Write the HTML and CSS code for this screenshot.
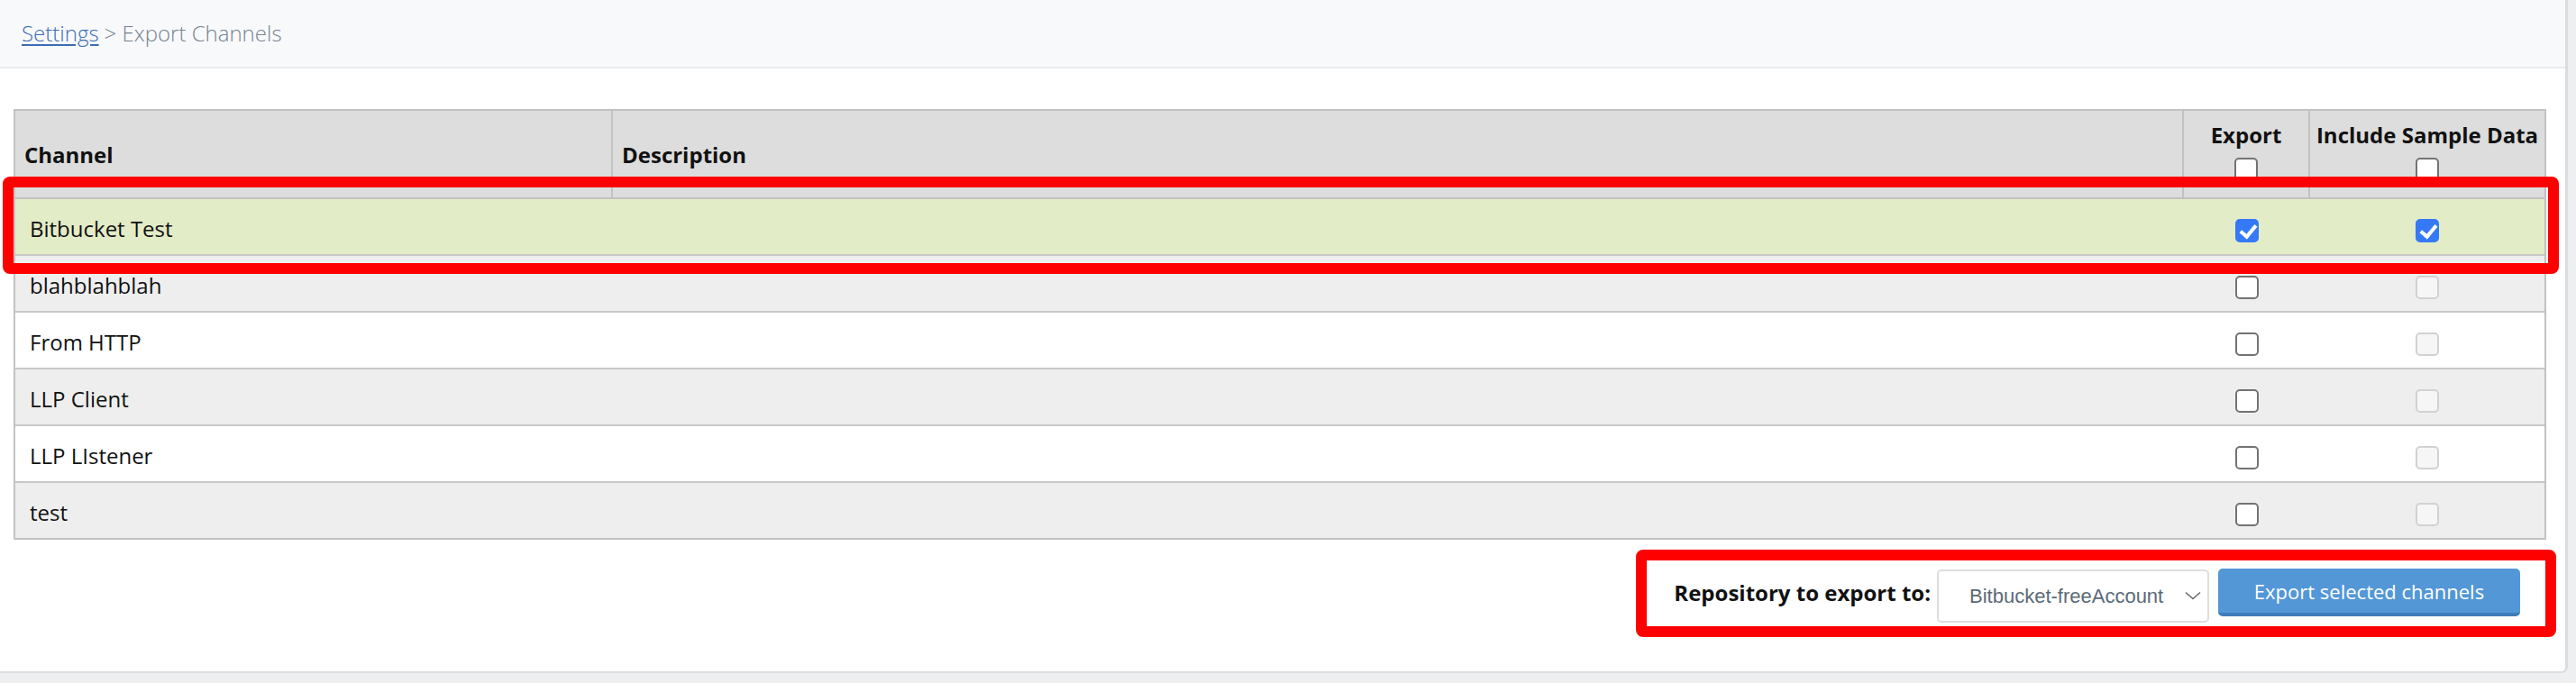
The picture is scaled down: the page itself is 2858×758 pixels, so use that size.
FILE: index.html
```html
<!DOCTYPE html>
<html lang="en">
<head>
<meta charset="utf-8">
<title>Export Channels</title>
<link rel="stylesheet" href="styles.css">
</head>
<body>
<div class="card">
  <div class="crumbs">
    <a class="crumb-link" href="#">Settings</a><span class="crumb-sep">&gt; Export Channels</span>
  </div>
  <div class="content">
    <div class="table-wrap">
      <table class="channels">
        <thead>
          <tr>
            <th class="col-channel">Channel</th>
            <th class="col-desc">Description</th>
            <th class="col-export">Export<input type="checkbox" class="cb head-cb"></th>
            <th class="col-sample">Include Sample Data<input type="checkbox" class="cb head-cb"></th>
          </tr>
        </thead>
        <tbody>
          <tr class="selected">
            <td>Bitbucket Test</td><td></td>
            <td class="c"><input type="checkbox" class="cb" checked></td>
            <td class="c"><input type="checkbox" class="cb" checked></td>
          </tr>
          <tr class="alt">
            <td>blahblahblah</td><td></td>
            <td class="c"><input type="checkbox" class="cb"></td>
            <td class="c"><input type="checkbox" class="cb" disabled></td>
          </tr>
          <tr>
            <td>From HTTP</td><td></td>
            <td class="c"><input type="checkbox" class="cb"></td>
            <td class="c"><input type="checkbox" class="cb" disabled></td>
          </tr>
          <tr class="alt">
            <td>LLP Client</td><td></td>
            <td class="c"><input type="checkbox" class="cb"></td>
            <td class="c"><input type="checkbox" class="cb" disabled></td>
          </tr>
          <tr>
            <td>LLP LIstener</td><td></td>
            <td class="c"><input type="checkbox" class="cb"></td>
            <td class="c"><input type="checkbox" class="cb" disabled></td>
          </tr>
          <tr class="alt last">
            <td>test</td><td></td>
            <td class="c"><input type="checkbox" class="cb"></td>
            <td class="c"><input type="checkbox" class="cb" disabled></td>
          </tr>
        </tbody>
      </table>
      <div class="mark mark-row"></div>
    </div>
    <div class="export-bar">
      <div class="export-group">
        <label class="repo-label" for="repo">Repository to export to:</label>
        <div class="select-wrap">
          <select id="repo" class="repo-select"><option>Bitbucket-freeAccount</option></select>
          <svg class="chev" width="18" height="10" viewBox="0 0 18 10"><path d="M1 1.5 L9 8.5 L17 1.5" fill="none" stroke="#6a6a6a" stroke-width="1.6"/></svg>
        </div>
        <button class="export-btn" type="button">Export selected channels</button>
        <div class="mark mark-bar"></div>
      </div>
    </div>
  </div>
</div>
</body>
</html>
```

FILE: styles.css
```css
* { box-sizing: border-box; }
html, body { margin: 0; padding: 0; }
body {
  background: #eeeff1;
  font-family: "Open Sans", "Liberation Sans", sans-serif;
  color: #111;
  width: 2858px;
  height: 758px;
  overflow: hidden;
}
.card {
  width: 2849px;
  background: #fff;
  border-right: 3px solid #dcdde0;
  border-bottom: 2px solid #dcdde0;
  border-bottom-right-radius: 7px;
  padding-bottom: 54px;
}
.crumbs {
  height: 76px;
  background: #f8f9fb;
  border-bottom: 2px solid #eaecef;
  display: flex;
  align-items: center;
  padding-left: 24px;
  padding-bottom: 2px;
  font-size: 24px;
  font-weight: 300;
}
.crumb-link { color: #3a6cb4; text-decoration: underline; text-underline-offset: 3px; }
.crumb-sep { color: #75838f; margin-left: 6px; }

.content { padding: 45px 21px 0 15px; }
.table-wrap { position: relative; }
.channels {
  width: 2810px;
  border-collapse: separate;
  border-spacing: 0;
  table-layout: fixed;
  border: 2px solid #c2c2c2;
  font-size: 24px;
}
.channels th {
  background: #dddddd;
  height: 98px;
  border-right: 2px solid #c2c2c2;
  border-bottom: 2px solid #c2c2c2;
  text-align: left;
  vertical-align: middle;
  font-weight: 700;
  padding: 0 10px;
  line-height: 33px;
  white-space: nowrap;
}
.channels th.col-sample { border-right: 0; }
.col-channel { width: 663px; }
.col-desc { width: 1743px; }
.col-export { width: 140px; }
.col-sample { width: 260px; }
.channels th.col-export, .channels th.col-sample { text-align: center; padding: 0; }

.channels td {
  height: 63px;
  border-bottom: 2px solid #c8c8c8;
  padding: 3px 16px 0;
  vertical-align: middle;
  background: #fff;
}
.channels tr.alt td { background: #eeeeee; }
.channels tr.selected td { background: #e2ecc7; }
.channels tr.last td { border-bottom: 0; height: 61px; }
.channels td.c { text-align: center; padding: 2px 0 0; }

.cb {
  -webkit-appearance: none;
  appearance: none;
  width: 26px;
  height: 26px;
  margin: 0;
  border: 2px solid #737373;
  border-radius: 5px;
  background: #fff;
  vertical-align: middle;
  position: relative;
}
.cb.head-cb { display: block; margin: 9px auto 8px; }
.cb:checked { background: #3579f6; border-color: #3579f6; }
.cb:checked::before {
  content: "";
  position: absolute;
  left: 7px;
  top: 1px;
  width: 7px;
  height: 14px;
  border: solid #fff;
  border-width: 0 4px 4px 0;
  transform: rotate(40deg);
}
.cb:disabled { border-color: #d2d2d2; background: #f6f6f6; }

.mark {
  position: absolute;
  border: 12px solid #ff0000;
  border-radius: 8px;
  pointer-events: none;
}
.mark-row { left: -12px; top: 75px; width: 2836px; height: 108px; }

.export-bar {
  display: flex;
  justify-content: flex-end;
  margin-top: 32px;
  padding-right: 29px;
}
.export-group {
  position: relative;
  display: flex;
  align-items: flex-start;
}
.repo-label {
  font-weight: 700;
  font-size: 24px;
  line-height: 53px;
  margin-right: 7px;
  color: #111;
}
.select-wrap { position: relative; margin-top: 1px; margin-right: 10px; }
.repo-select {
  -webkit-appearance: none;
  appearance: none;
  width: 302px;
  height: 59px;
  border: 2px solid #dedede;
  border-radius: 5px;
  background: #fff;
  font-family: "Liberation Sans", Arial, sans-serif;
  font-size: 22px;
  color: #5a6a78;
  padding: 0 0 0 34px;
}
.chev { position: absolute; left: 275px; top: 24px; }
.export-btn {
  width: 335px;
  height: 53px;
  background: #5397d7;
  border: 0;
  border-bottom: 4px solid #3f7bba;
  border-radius: 5px;
  color: #fff;
  font-family: "Open Sans", sans-serif;
  font-size: 22px;
  padding: 0;
}
.mark-bar { left: -42px; top: -21px; right: -40px; bottom: -16px; }
```
